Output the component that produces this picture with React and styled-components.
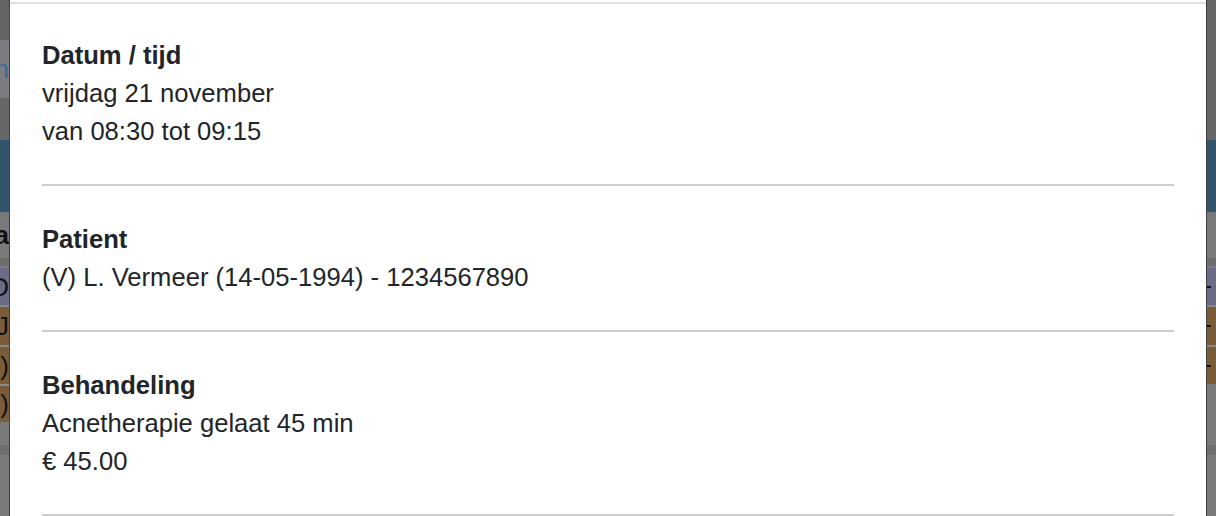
import React from "react";
import styled, { createGlobalStyle } from "styled-components";

const Global = createGlobalStyle`
  html, body { margin: 0; padding: 0; }
  body {
    width: 1216px;
    height: 516px;
    overflow: hidden;
    background: #7a7a7a;
    font-family: "Liberation Sans", Arial, Helvetica, sans-serif;
  }
`;

const Page = styled.div`
  position: relative;
  width: 1216px;
  height: 516px;
  overflow: hidden;
`;

/* Page behind the modal, already dimmed by the backdrop */
const BehindPage = styled.div`
  display: flex;
  flex-direction: column;
  width: 100%;
  height: 100%;
`;

const Band = styled.div`
  display: flex;
  justify-content: space-between;
  align-items: center;
  height: ${(p) => p.$h}px;
  flex: none;
  background: ${(p) => p.$bg};
  border-top: ${(p) => (p.$line ? `2px solid ${p.$line}` : "none")};
  box-sizing: border-box;
  font-size: 26px;
  color: #111;
  overflow: hidden;
`;

const Cell = styled.div`
  width: 9px;
  height: 100%;
  display: flex;
  align-items: center;
  justify-content: ${(p) => (p.$right ? "flex-start" : "flex-end")};
  background: ${(p) => p.$bg || "transparent"};
  color: ${(p) => p.$color || "#111"};
  font-weight: ${(p) => (p.$bold ? 700 : 400)};
  white-space: nowrap;
  overflow: hidden;
  line-height: 1;
`;

const Dash = styled.span`
  display: block;
  width: 4px;
  height: 2px;
  background: #111;
`;

const Modal = styled.div`
  position: absolute;
  top: 0;
  left: 9px;
  width: 1198px;
  bottom: 0;
  background: #fff;
  border-left: 1px solid #3f3f3f;
  border-right: 1px solid #3f3f3f;
  box-sizing: border-box;
  display: flex;
  flex-direction: column;
`;

const HeaderEdge = styled.div`
  height: 2px;
  border-bottom: 2px solid #dde2e8;
  flex: none;
`;

const Body = styled.div`
  padding: 32px 32px 0 32px;
  color: #212529;
  font-size: 25.6px;
  line-height: 38px;
`;

const Section = styled.section`
  display: flex;
  flex-direction: column;
`;

const Label = styled.div`
  font-weight: 700;
`;

const Line = styled.div``;

const Divider = styled.hr`
  border: 0;
  height: 2px;
  background: #cdcdcd;
  margin: 34px 0;
`;

const bands = [
  { h: 40, left: "#646464", right: "#666666" },
  { h: 58, left: "#7b7d81", right: "#666666", lt: "ch", lc: "#3a6b97" },
  { h: 42, left: "#676767", right: "#666666" },
  { h: 72, left: "#34546b", right: "#34546b" },
  { h: 46, left: "#7a7a7a", right: "#7a7a7a", lt: "a", bold: true },
  { h: 8, left: "#6c6c6c", right: "#6c6c6c" },
  { h: 2, left: "#7a7a7a", right: "#7a7a7a" },
  { h: 37, left: "#6b6d88", right: "#6b6d88", lt: "D", dash: true },
  { h: 2, left: "#8a8a8a", right: "#8a8a8a" },
  { h: 38, left: "#7a5d38", right: "#7a5d38", lt: "J", dash: true },
  { h: 2, left: "#8a8a8a", right: "#8a8a8a" },
  { h: 37, left: "#7a5d38", right: "#7a5d38", lt: "O)", dash: true },
  { h: 2, left: "#8a8a8a", right: "#7a7a7a" },
  { h: 36, left: "#7a5d38", right: "#7a7a7a", lt: ")" },
  { h: 23, left: "#7a7a7a", right: "#7a7a7a" },
  { h: 10, left: "#6e6e6e", right: "#6e6e6e" },
  { h: 80, left: "#7a7a7a", right: "#7a7a7a" },
];

const sections = [
  { label: "Datum / tijd", lines: ["vrijdag 21 november", "van 08:30 tot 09:15"] },
  { label: "Patient", lines: ["(V) L. Vermeer (14-05-1994) - 1234567890"] },
  { label: "Behandeling", lines: ["Acnetherapie gelaat 45 min", "€ 45.00"] },
];

export default function App() {
  return (
    <Page>
      <Global />
      <BehindPage>
        {bands.map((b, i) => (
          <Band key={i} $h={b.h} $bg={b.left}>
            <Cell $bg={b.left} $color={b.lc} $bold={b.bold}>
              {b.lt || ""}
            </Cell>
            <Cell $right $bg={b.right}>
              {b.dash ? <Dash /> : null}
            </Cell>
          </Band>
        ))}
      </BehindPage>
      <Modal>
        <HeaderEdge />
        <Body>
          {sections.map((s) => (
            <React.Fragment key={s.label}>
              <Section>
                <Label>{s.label}</Label>
                {s.lines.map((l) => (
                  <Line key={l}>{l}</Line>
                ))}
              </Section>
              <Divider />
            </React.Fragment>
          ))}
        </Body>
      </Modal>
    </Page>
  );
}
